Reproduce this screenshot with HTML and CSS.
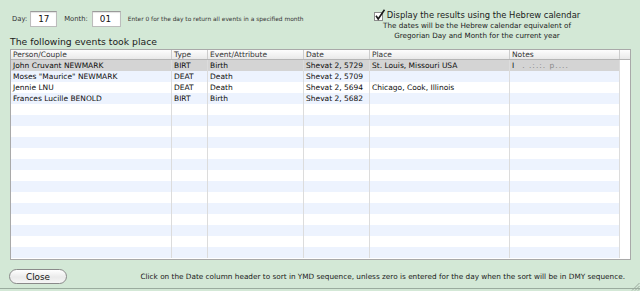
FILE: index.html
```html
<!DOCTYPE html>
<html lang="en">
<head>
  <meta charset="UTF-8" />
  <title>Events on this day</title>
  <link rel="stylesheet" href="styles.css">
</head>
<body>
  <div class="window">
    <div class="top">
      <div class="left">
        <div class="fields">
          <label for="day">Day:</label>
          <input type="text" id="day" class="field day" value="17" />
          <label for="month">Month:</label>
          <input type="text" id="month" class="field month" value="01" />
          <span class="hint">Enter 0 for the day to return all events in a specified month</span>
        </div>
        <p class="caption">The following events took place</p>
      </div>
      <div class="hebrew">
        <label class="option">
          <svg class="check" width="12" height="12" viewBox="0 0 12 12">
            <rect x="0.5" y="3.5" width="8" height="8" fill="#fff" stroke="#8c8c8c" />
            <path d="M2 6.8 L4.2 10 L10.5 0.8" fill="none" stroke="#1a1a1a" stroke-width="1.6" />
          </svg>
          Display the results using the Hebrew calendar
        </label>
        <p class="note">The dates will be the Hebrew calendar equivalent of<br>Gregorian Day and Month for the current year</p>
      </div>
    </div>

    <div class="grid">
      <div class="head">
        <span>Person/Couple</span><span>Type</span><span>Event/Attribute</span><span>Date</span><span>Place</span><span>Notes</span><span class="corner"></span>
      </div>
      <div class="rows">
        <div class="row selected"><span>John Cruvant NEWMARK</span><span>BIRT</span><span>Birth</span><span>Shevat 2, 5729</span><span>St. Louis, Missouri USA</span><span>I<em class="smudge">. .:.:. p....</em></span></div>
        <div class="row"><span>Moses "Maurice" NEWMARK</span><span>DEAT</span><span>Death</span><span>Shevat 2, 5709</span><span></span><span></span></div>
        <div class="row"><span>Jennie LNU</span><span>DEAT</span><span>Death</span><span>Shevat 2, 5694</span><span>Chicago, Cook, Illinois</span><span></span></div>
        <div class="row"><span>Frances Lucille BENOLD</span><span>BIRT</span><span>Birth</span><span>Shevat 2, 5682</span><span></span><span></span></div>
        <div class="row"><span></span><span></span><span></span><span></span><span></span><span></span></div>
        <div class="row"><span></span><span></span><span></span><span></span><span></span><span></span></div>
        <div class="row"><span></span><span></span><span></span><span></span><span></span><span></span></div>
        <div class="row"><span></span><span></span><span></span><span></span><span></span><span></span></div>
        <div class="row"><span></span><span></span><span></span><span></span><span></span><span></span></div>
        <div class="row"><span></span><span></span><span></span><span></span><span></span><span></span></div>
        <div class="row"><span></span><span></span><span></span><span></span><span></span><span></span></div>
        <div class="row"><span></span><span></span><span></span><span></span><span></span><span></span></div>
        <div class="row"><span></span><span></span><span></span><span></span><span></span><span></span></div>
        <div class="row"><span></span><span></span><span></span><span></span><span></span><span></span></div>
        <div class="row"><span></span><span></span><span></span><span></span><span></span><span></span></div>
        <div class="row"><span></span><span></span><span></span><span></span><span></span><span></span></div>
        <div class="row"><span></span><span></span><span></span><span></span><span></span><span></span></div>
        <div class="row"><span></span><span></span><span></span><span></span><span></span><span></span></div>
      </div>
    </div>

    <div class="footer">
      <button class="close">Close</button>
      <p>Click on the Date column header to sort in YMD sequence, unless zero is entered for the day when the sort will be in DMY sequence.</p>
    </div>
    <div class="edge"></div>

    <svg class="grip" width="10" height="10" viewBox="0 0 10 10">
      <path d="M9.5 2 L2 9.5 M9.5 5 L5 9.5 M9.5 8 L8 9.5" stroke="#9aa89d" stroke-width="1" />
    </svg>
  </div>
</body>
</html>
```

FILE: styles.css
```css
* {
  box-sizing: border-box;
  margin: 0;
  padding: 0;
}
body {
  font-family: "DejaVu Sans", "Liberation Sans", sans-serif;
  background: #d3e8d6;
  color: #222;
}
.window {
  position: relative;
  width: 640px;
  height: 291px;
  background: #d3e8d6;
  overflow: hidden;
}
.top {
  display: flex;
  height: 49px;
}
.left {
  flex: 1;
  padding-left: 10px;
}
.fields {
  display: flex;
  align-items: center;
  height: 16px;
  margin-top: 11px;
  padding-left: 2px;
}
.fields label {
  font-size: 6.8px;
  color: #333;
}
.field {
  height: 16px;
  margin: 0 7px 0 3px;
  padding-left: 7px;
  font-family: inherit;
  font-size: 8.8px;
  color: #111;
  background: #fff;
  border: 1px solid #bcbcbc;
  border-top-color: #9a9a9a;
  box-shadow: inset 0 1px 1px rgba(0,0,0,0.12);
  outline: none;
}
.field.day {
  width: 27px;
}
.field.month {
  width: 29px;
  margin-left: 4px;
}
.hint {
  font-size: 5.9px;
  color: #333;
  white-space: nowrap;
}
.caption {
  margin-top: 9px;
  font-size: 9.25px;
  line-height: 11px;
  color: #1a1a1a;
  white-space: nowrap;
}
.hebrew {
  width: 250px;
  margin-right: 38px;
  padding-top: 10px;
  text-align: center;
  color: #1a1a1a;
}
.option {
  display: flex;
  justify-content: center;
  align-items: center;
  font-size: 8.4px;
  line-height: 11px;
  white-space: nowrap;
}
.check {
  margin-right: 1px;
  margin-top: -2px;
}
.note {
  font-size: 7.2px;
  line-height: 10px;
  white-space: nowrap;
}
.grid {
  height: 211px;
  margin: 0 9px 0 10px;
  padding-bottom: 1px;
  background: #fff;
  border: 1px solid #a9a9a9;
}
.head, .row {
  display: grid;
  grid-template-columns: 161px 36px 96px 66px 140px 110px;
}
.head {
  grid-template-columns: 161px 36px 96px 66px 140px 110px 1fr;
  height: 10px;
  background: linear-gradient(#fdfdfd, #e9e9e9);
  border-bottom: 1px solid #b5b5b5;
}
.head span {
  padding-left: 2px;
  font-size: 7.5px;
  line-height: 9px;
  color: #333;
  border-right: 1px solid #cdcdcd;
  white-space: nowrap;
  overflow: hidden;
}
.head .corner {
  border-right: none;
}
.row {
  width: 609px;
  height: 11px;
}
.row:nth-child(even) {
  background: #edf3fe;
}
.row.selected {
  background: #d4d4d4;
}
.row span {
  padding-left: 2px;
  font-size: 7.5px;
  line-height: 11px;
  color: #0d0d0d;
  border-right: 1px solid #dcdcdc;
  white-space: nowrap;
  overflow: hidden;
}
.smudge {
  margin-left: 8px;
  font-style: normal;
  color: #888;
  letter-spacing: 1px;
}
.footer {
  display: flex;
  justify-content: space-between;
  align-items: flex-start;
  height: 28px;
  padding: 9px 15px 0 9px;
}
.close {
  width: 58px;
  height: 15px;
  font-family: inherit;
  font-size: 8.8px;
  color: #111;
  background: linear-gradient(#ffffff, #eaeaea 55%, #f6f6f6);
  border: 1px solid #8a8a8a;
  border-radius: 8px;
}
.footer p {
  font-size: 7.3px;
  line-height: 16px;
  color: #1a1a1a;
  white-space: nowrap;
}
.edge {
  height: 3px;
  border-top: 1px solid #9aac9e;
}
.grip {
  position: absolute;
  right: 0;
  bottom: 0;
}
```
